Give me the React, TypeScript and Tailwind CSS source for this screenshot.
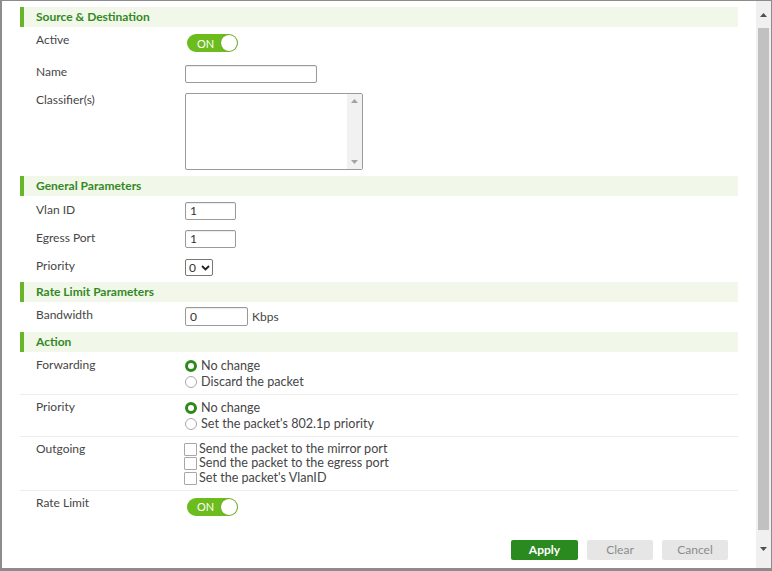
import { ReactNode } from 'react'

const font = { fontFamily: 'Lato, "Noto Sans", sans-serif' }

function Header({ title, className = '' }: { title: string; className?: string }) {
    return (
        <div
            className={`flex h-[20px] items-center border-l-4 border-[#66b52b] bg-[#f1f8ea] pl-[12px] text-[12px] font-bold text-[#33891f] ${className}`}
        >
            {title}
        </div>
    )
}

function Row({
    label,
    className = '',
    children,
}: {
    label: string
    className?: string
    children: ReactNode
}) {
    return (
        <div className={`flex items-start pl-[16px] ${className}`}>
            <div className="w-[149px] text-[12px] leading-4 text-[#464646]">{label}</div>
            <div>{children}</div>
        </div>
    )
}

function Toggle({ className = '' }: { className?: string }) {
    return (
        <div
            className={`ml-[2px] flex h-[18px] w-[51px] items-center justify-between rounded-full bg-[#6cbc1e] pl-[10px] pr-[1px] ${className}`}
        >
            <span className="text-[11px] leading-none text-white">ON</span>
            <span className="h-[16px] w-[16px] rounded-full bg-white shadow-[0_0_1px_rgba(0,0,0,0.4)]" />
        </div>
    )
}

function TextBox({ w, h = 18, value = '' }: { w: number; h?: number; value?: string }) {
    return (
        <div
            className="flex items-center rounded-[2px] border border-[#9a9a9a] bg-white px-[4px] text-[12px] text-[#333] shadow-[inset_0_1px_1px_rgba(0,0,0,0.08)]"
            style={{ width: w, height: h }}
        >
            {value}
        </div>
    )
}

function Radio({ checked, label }: { checked?: boolean; label: string }) {
    return (
        <div className="flex h-4 items-center gap-[4px] text-[12.6px] text-[#464646]">
            {checked ? (
                <span className="h-[12px] w-[12px] rounded-full border-[3px] border-[#2c8a1c] bg-white" />
            ) : (
                <span className="h-[12px] w-[12px] rounded-full border border-[#a8a8a8] bg-white" />
            )}
            <span>{label}</span>
        </div>
    )
}

function Check({ label }: { label: string }) {
    return (
        <div className="-ml-[1px] flex h-[14.5px] items-center gap-[2px] text-[12.6px] text-[#464646]">
            <span className="h-[13px] w-[13px] rounded-[1px] border border-[#a8a8a8] bg-white" />
            <span>{label}</span>
        </div>
    )
}

function Divider({ className = '' }: { className?: string }) {
    return <div className={`h-px bg-[#ececec] ${className}`} />
}

function Arrow({ up, className = '' }: { up?: boolean; className?: string }) {
    return (
        <svg width="7" height="4" viewBox="0 0 7 4" className={className}>
            <path d={up ? 'M0 4 L3.5 0 L7 4 Z' : 'M0 0 L3.5 4 L7 0 Z'} fill="currentColor" />
        </svg>
    )
}

export default function App() {
    return (
        <div
            className="flex h-[571px] w-[772px] border-t border-b-[3px] border-l-2 border-r border-[#8c8c8c] bg-white"
            style={font}
        >
            <div className="flex-1 pl-[18px] pr-[18px] pt-[6px]">
                <Header title="Source & Destination" />

                <Row label="Active" className="mt-[5px]">
                    <Toggle className="mt-[2px]" />
                </Row>
                <Row label="Name" className="mt-[12px]">
                    <div className="mt-[1px]">
                        <TextBox w={132} />
                    </div>
                </Row>
                <Row label="Classifier(s)" className="mt-[9px]">
                    <div className="mt-[1px] flex h-[77px] w-[178px] rounded-[2px] border border-[#9a9a9a] bg-white">
                        <div className="flex-1" />
                        <div className="flex w-[15px] flex-col items-center justify-between bg-[#f1f1f1] py-[5px] text-[#a3a3a3]">
                            <Arrow up />
                            <Arrow />
                        </div>
                    </div>
                </Row>

                <Header title="General Parameters" className="mt-[6px]" />
                <Row label="Vlan ID" className="mt-[6px]">
                    <TextBox w={51} value="1" />
                </Row>
                <Row label="Egress Port" className="mt-[10px]">
                    <TextBox w={51} value="1" />
                </Row>
                <Row label="Priority" className="mt-[10px]">
                    <div className="mt-[1px] flex h-[17px] w-[28px] items-center justify-between rounded-[2px] border border-[#777] bg-white pl-[3px] pr-[2px] text-[12px] text-[#333]">
                        <span>0</span>
                        <svg width="9" height="6" viewBox="0 0 9 6">
                            <path d="M1 1 L4.5 4.5 L8 1" stroke="#222" strokeWidth="1.8" fill="none" />
                        </svg>
                    </div>
                </Row>

                <Header title="Rate Limit Parameters" className="mt-[6px]" />
                <Row label="Bandwidth" className="mt-[5px]">
                    <div className="flex items-center gap-[4px]">
                        <TextBox w={63} h={19} value="0" />
                        <span className="text-[12px] text-[#464646]">Kbps</span>
                    </div>
                </Row>

                <Header title="Action" className="mt-[6px]" />
                <Row label="Forwarding" className="mt-[5px]">
                    <div className="mt-[1px]">
                        <Radio checked label="No change" />
                        <Radio label="Discard the packet" />
                    </div>
                </Row>
                <Divider className="mt-[4px]" />
                <Row label="Priority" className="mt-[4px]">
                    <div className="mt-[1px]">
                        <Radio checked label="No change" />
                        <Radio label="Set the packet's 802.1p priority" />
                    </div>
                </Row>
                <Divider className="mt-[4px]" />
                <Row label="Outgoing" className="mt-[4px]">
                    <div className="mt-[1px]">
                        <Check label="Send the packet to the mirror port" />
                        <Check label="Send the packet to the egress port" />
                        <Check label="Set the packet's VlanID" />
                    </div>
                </Row>
                <Divider className="mt-[4px]" />
                <Row label="Rate Limit" className="mt-[4px]">
                    <Toggle className="mt-[3px]" />
                </Row>

                <div className="mt-[24px] flex justify-end gap-[9px] pr-[10px] text-[12px]">
                    <button className="h-[20px] w-[67px] rounded-[2px] bg-[#2a8a1f] font-bold text-white">
                        Apply
                    </button>
                    <button className="h-[20px] w-[66px] rounded-[2px] bg-[#e6e6e6] text-[#8c8c8c]">
                        Clear
                    </button>
                    <button className="h-[20px] w-[66px] rounded-[2px] bg-[#e6e6e6] text-[#8c8c8c]">
                        Cancel
                    </button>
                </div>
            </div>

            <div className="flex w-[15px] flex-col items-center bg-[#f0f0f0] text-[#505050]">
                <div className="flex h-[27px] items-center">
                    <Arrow up />
                </div>
                <div className="w-[11px] flex-1 bg-[#c1c1c1]" />
                <div className="flex h-[38px] items-center">
                    <Arrow />
                </div>
            </div>
        </div>
    )
}
